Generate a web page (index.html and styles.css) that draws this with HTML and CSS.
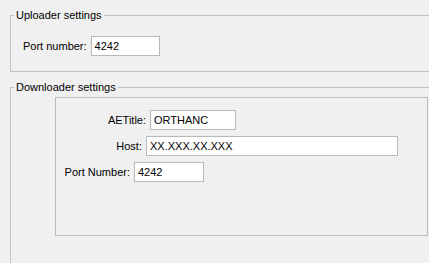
FILE: index.html
```html
<!DOCTYPE html>
<html>
<head>
<meta charset="utf-8">
<link rel="stylesheet" href="styles.css">
</head>
<body>
<div class="page">
  <fieldset class="group uploader">
    <legend class="group-title">Uploader settings</legend>
    <div class="group-body upload-body">
      <div class="row">
        <label class="lbl">Port number:</label>
        <div class="field field-port">4242</div>
      </div>
    </div>
  </fieldset>
  <fieldset class="group downloader">
    <legend class="group-title">Downloader settings</legend>
    <div class="group-body download-body">
      <div class="panel">
        <div class="form-row">
          <label class="lbl lbl-ae">AETitle:</label>
          <div class="field field-ae">ORTHANC</div>
        </div>
        <div class="form-row">
          <label class="lbl lbl-host">Host:</label>
          <div class="field field-host">XX.XXX.XX.XXX</div>
        </div>
        <div class="form-row">
          <label class="lbl lbl-port">Port Number:</label>
          <div class="field field-dport">4242</div>
        </div>
      </div>
    </div>
  </fieldset>
</div>
</body>
</html>
```
FILE: styles.css
```css
html, body {
  margin: 0;
  padding: 0;
  background: #f0f0f0;
  overflow: hidden;
  width: 429px;
  height: 263px;
}
.page {
  box-sizing: border-box;
  padding-top: 9px;
  height: 263px;
  font-family: "Liberation Sans", Arial, sans-serif;
  font-size: 11px;
  color: #000;
}
.group {
  box-sizing: border-box;
  margin: 0 0 0 10px;
  border: 1px solid #c2c2c2;
  border-right: none;
  padding: 0;
  min-width: 0;
  width: 419px;
}
.group-title {
  margin-left: 3px;
  padding: 0 2px;
  line-height: 13px;
  height: 13px;
}
.upload-body {
  padding: 14px 0 15px 12px;
}
.downloader {
  margin-top: 9px;
  border-bottom: none;
  height: 182px;
}
.download-body {
  padding: 3px 0 0 44px;
}
.row {
  display: flex;
  align-items: center;
  gap: 4px;
}
.lbl {
  line-height: 13px;
  white-space: nowrap;
}
.field {
  box-sizing: border-box;
  height: 20px;
  border: 1px solid #b8b8b8;
  background: #fff;
  padding: 0 3px;
  line-height: 18px;
  white-space: nowrap;
  overflow: hidden;
}
.field-port { width: 69px; }
.panel {
  box-sizing: border-box;
  width: 373px;
  height: 139px;
  border: 1px solid #bcbcbc;
  padding-top: 12px;
  display: flex;
  flex-direction: column;
  gap: 6px;
}
.form-row {
  display: flex;
  align-items: center;
  gap: 4px;
}
.form-row .lbl { text-align: right; }
.lbl-ae { width: 90px; }
.lbl-host { width: 86px; }
.lbl-port { width: 74px; }
.field-ae { width: 86px; }
.field-host { width: 252px; }
.field-dport { width: 70px; }
```
